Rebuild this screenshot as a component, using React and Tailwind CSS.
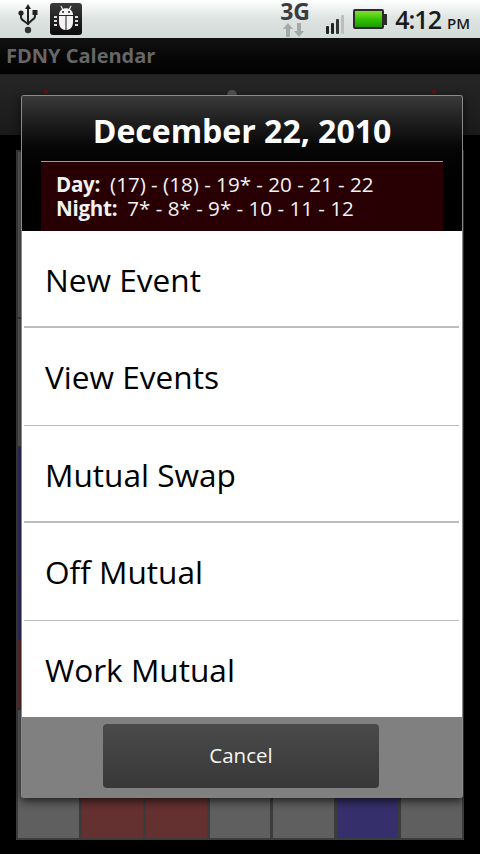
const font = { fontFamily: '"Open Sans", "Noto Sans", sans-serif' };

const G = "bg-[#5f5f5f]", R = "bg-[#653030]", B = "bg-[#35306b]";
const rows = [
  { h: "h-[165px]", cells: [G, G, G, G, G, G, G] },
  { h: "h-[127px]", cells: [G, G, G, G, G, G, G] },
  { h: "h-[129px]", cells: [B, G, G, G, G, G, G] },
  { h: "h-[129px]", cells: ["bg-gradient-to-b from-[#35306b] from-47% to-[#653030] to-47%", G, G, G, G, G, G] },
  { h: "h-[128px]", cells: [G, R, R, G, G, B, G] },
];

function Usb() {
  return (
    <svg width="20" height="32" viewBox="0 0 20 32" className="ml-[18px]">
      <path d="M10 1l3 5h-2v16h-2V6H7z" fill="#222" />
      <path d="M3 11v3c0 2 1 3 3 4l4 3 4-4c2-1 3-2 3-4v-3" fill="none" stroke="#222" strokeWidth="2" />
      <circle cx="3" cy="10" r="2.6" fill="#222" />
      <rect x="14.5" y="7" width="5" height="5" fill="#222" />
      <circle cx="10" cy="27" r="3.2" fill="#333" />
    </svg>
  );
}

function Bug() {
  return (
    <div className="ml-[12px] flex h-[32px] w-[32px] items-center justify-center rounded-[3px] bg-gradient-to-b from-[#3a3a3a] to-[#0c0c0c]">
      <svg width="26" height="28" viewBox="0 0 26 28">
        <path d="M8 1l2 4M18 1l-2 4" stroke="#eee" strokeWidth="1.2" />
        <path d="M6 10c0-9 14-9 14 0z" fill="#f4f4f4" />
        <path d="M6 11h6.5v14C8 25 6 21 6 17zM13.500 11H20v6c0 4-2 8-6.500 8z" fill="#f4f4f4" />
        <circle cx="10" cy="7" r="1" fill="#222" />
        <circle cx="16" cy="7" r="1" fill="#222" />
        <path d="M1 11h3v2H1zM1 15h3v2H1zM1 19h3v2H1zM22 11h3v2h-3zM22 15h3v2h-3zM22 19h3v2h-3z" fill="#ddd" />
      </svg>
    </div>
  );
}

function Signal() {
  return (
    <svg width="20" height="20" viewBox="0 0 20 20" className="ml-[12px] mt-[15px]">
      <rect x="0" y="11" width="3" height="8" rx="1" fill="#222" />
      <rect x="5" y="8" width="3" height="11" rx="1" fill="#222" />
      <rect x="10" y="4" width="3" height="15" rx="1" fill="#333" />
      <rect x="15" y="0" width="3" height="19" rx="1" fill="#b9bfbd" />
    </svg>
  );
}

function Battery() {
  return (
    <div className="ml-[7px] mt-[9px] flex items-center self-start">
      <div className="h-[20px] w-[31px] rounded-[2px] border-[2px] border-[#2a2a2a] bg-gradient-to-b from-[#7fe02a] via-[#33c500] to-[#1d9a00]" />
      <div className="h-[11px] w-[3px] bg-[#2a2a2a]" />
    </div>
  );
}

function Arrows() {
  return (
    <svg width="24" height="14" viewBox="0 0 24 14" className="ml-[2px]">
      <path d="M6 0l5 6H8v8H4V6H1zM17 14l5-6h-3V0h-4v8h-3z" fill="#a3a9a8" />
    </svg>
  );
}

export default function App() {
  return (
    <div className="relative h-[854px] w-[480px] overflow-hidden bg-black" style={font}>
      <div className="flex h-[38px] items-center bg-gradient-to-b from-[#ffffff] via-[#dde3e1] to-[#d3dbd9]">
        <Usb />
        <Bug />
        <div className="ml-auto flex h-full items-start">
          <div className="w-[34px] pt-[1px]">
            <div className="h-[22px] text-[23px] font-bold leading-[21px] text-[#3c3c3c]">3G</div>
            <Arrows />
          </div>
          <Signal />
          <Battery />
          <div className="ml-[8px] mr-[10px] mt-[4px] flex items-baseline text-[#1a1a1a]">
            <span className="text-[25px] font-semibold leading-[30px] tracking-[-1px]">4:12</span>
            <span className="ml-[6px] text-[15px] font-semibold leading-[30px]">PM</span>
          </div>
        </div>
      </div>

      <div className="flex h-[36px] items-center bg-gradient-to-b from-[#111111] to-[#020202] px-[6px] text-[20px] font-bold text-[#666666]">
        FDNY Calendar
      </div>
      <div className="flex h-[61px] items-start justify-between border-t border-[#1c1c1c] bg-gradient-to-b from-[#262626] to-[#1a1a1a] px-[44px] pt-[15px]">
        <div className="h-[4px] w-[4px] bg-[#5a1515]" />
        <div className="mr-[16px] h-[5px] w-[10px] rounded-t-full bg-[#555555]" />
        <div className="h-[4px] w-[4px] bg-[#5a1515]" />
      </div>

      <div className="mx-[16px] mt-[15px] flex flex-col gap-[2px] bg-[#3c3c3c] p-[2px]">
        {rows.map((r, i) => (
          <div key={i} className={`grid grid-cols-7 gap-[3px] ${r.h}`}>
            {r.cells.map((c, j) => (
              <div key={j} className={c} />
            ))}
          </div>
        ))}
      </div>

      <div className="absolute left-[21px] top-[95px] flex h-[703px] w-[442px] flex-col overflow-hidden rounded-[3px] border-x border-t border-[#8a8a8a] shadow-[0_3px_10px_rgba(0,0,0,0.7)]">
        <div className="flex h-[135px] flex-col bg-gradient-to-b from-[#3a3a3a] from-0% via-[#050505] via-40% to-black px-[19px]">
          <div className="flex h-[65px] shrink-0 items-center justify-center pt-[4px] text-[32px] font-bold text-white">
            December 22, 2010
          </div>
          <div className="flex-1 border-t border-[#a09a9a] bg-[#280003] px-[15px] pt-[10px] text-[20.600px] leading-[24px] text-[#f2f2f2]">
            <div className="flex">
              <b className="font-bold tracking-[-0.3px]">Day:</b>
              <span className="ml-[10px]">(17) - (18) - 19* - 20 - 21 - 22</span>
            </div>
            <div className="flex">
              <b className="font-bold tracking-[-0.3px]">Night:</b>
              <span className="ml-[10px]">7* - 8* - 9* - 10 - 11 - 12</span>
            </div>
          </div>
        </div>

        <div className="flex h-[486px] flex-col bg-white pl-[2px] pr-[3px]">
          {[
            ["New Event", "h-[97px] pt-[2px] border-b-2 border-[#bcbcbc]"],
            ["View Events", "h-[98px] border-b border-[#bcbcbc]"],
            ["Mutual Swap", "h-[97px] pt-[2px] border-b-2 border-[#bcbcbc]"],
            ["Off Mutual", "h-[98px] border-b border-[#bcbcbc]"],
            ["Work Mutual", "h-[96px] pt-[2px]"],
          ].map(([t, c]) => (
            <div key={t} className={`flex items-center pl-[21px] text-[31.600px] text-black ${c}`}>
              {t}
            </div>
          ))}
        </div>

        <div className="flex flex-1 items-start justify-center bg-[#808080] pt-[7px]">
          <button className="-ml-[2px] flex h-[64px] w-[276px] items-center justify-center rounded-[4px] bg-gradient-to-b from-[#4a4a4a] to-[#383838] pb-[1px] text-[20.500px] text-[#f4f4f4]">
            Cancel
          </button>
        </div>
      </div>
    </div>
  );
}
